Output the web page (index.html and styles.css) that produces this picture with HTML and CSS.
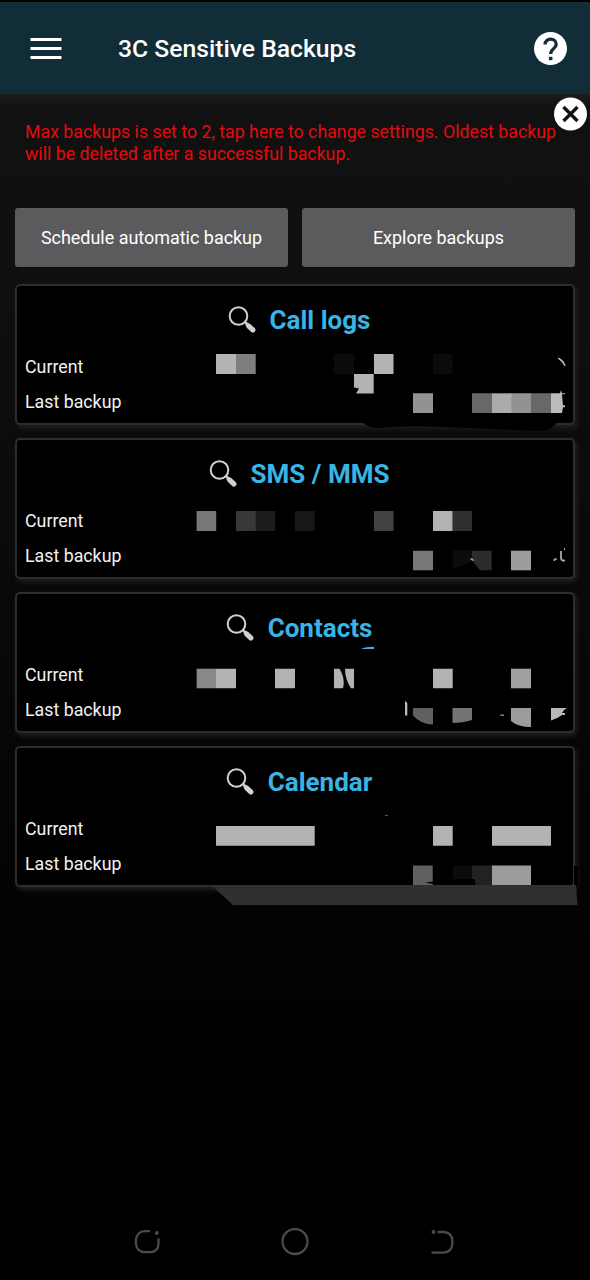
FILE: index.html
```html
<!DOCTYPE html>
<html lang="en">
<head>
<meta charset="utf-8">
<title>3C Sensitive Backups</title>
<link rel="stylesheet" href="styles.css">
</head>
<body>
<svg width="0" height="0" class="defs">
  <symbol id="lens" viewBox="0 0 28 28">
    <circle cx="10.500" cy="10" r="8.800" fill="none" stroke="#d2d0d2" stroke-width="2"/>
    <path d="M16.500 15.500l3 3" stroke="#d2d0d2" stroke-width="2.400"/>
    <path d="M19.500 18.800L21 20.300" stroke="#d2d0d2" stroke-width="4" stroke-linecap="round"/>
    <path d="M21 20.300l3.800 3.600" stroke="#d2d0d2" stroke-width="5.200" stroke-linecap="round"/>
  </symbol>
</svg>
<div class="screen">
  <header class="bar">
    <svg class="menu" viewBox="0 0 32 22"><path d="M.5 1.500h31M.5 10.500h31M.5 19.500h31" stroke="#fff" stroke-width="3"/></svg>
    <h1 class="title">3C Sensitive Backups</h1>
    <svg class="help" viewBox="0 0 34 34"><circle cx="17.500" cy="16.500" r="16.500" fill="#fff"/><path d="M12.100 12.500c0-7.200 11.100-6.900 11.100-.2 0 4.400-5.500 4.400-5.500 9.800" fill="none" stroke="#102d38" stroke-width="3.300"/><path d="M15.900 24.800h3.500v3.400h-3.500z" fill="#102d38"/></svg>
  </header>
  <main class="content">
    <section class="notice">
      <p class="warning">Max backups is set to 2, tap here to change settings. Oldest backup<br>will be deleted after a successful backup.</p>
      <svg class="close" viewBox="0 0 34 34"><circle cx="17.500" cy="17" r="16.500" fill="#fff"/><path d="M10.500 10l14 14M24.500 10l-14 14" stroke="#111" stroke-width="3.400"/></svg>
    </section>
    <div class="actions">
      <button class="btn">Schedule automatic backup</button>
      <button class="btn">Explore backups</button>
    </div>
    <section class="card">
      <h2 class="card-title"><svg class="lens"><use href="#lens"/></svg>Call logs</h2>
      <p class="row">Current</p><p class="row">Last backup</p>
      <svg class="mosaic" viewBox="0 284 590 154">
        <path d="M362 421h195v2q-6 8-20 8l-92-4q-42-2-65 1q-12 0-18-6z" fill="#000"/>
        <path d="M216 354h20v20h-20zM374 354h19.5v20H374zM354 374h19.7v19.5H356l3-5-5-1z" fill="#b3b3b3"/>
        <path d="M236 354h19.7v20H236z" fill="#7e7e7e"/>
        <path d="M334 354h20v20h-20zM433 354h19.5v20H433z" fill="#0b0b0b"/>
        <path d="M413 393.3h20v19.7h-20zM511 393.3h20v19.7h-20z" fill="#929292"/>
        <path d="M472 393.3h20v19.7h-20zM531 393.3h20v19.7h-20z" fill="#686868"/>
        <path d="M492 393.3h19.5v19.7H492z" fill="#ababab"/>
        <path d="M551 393.3h9l1-3 1 3h3v1h-3l1 11h2v2h-2l-1 5.7h-11z" fill="#bbb"/>
        <path d="M558 358q6 2 7 8-3-5-7-8" fill="#bbb" stroke="#bbb"/>
      </svg>
    </section>
    <section class="card">
      <h2 class="card-title"><svg class="lens"><use href="#lens"/></svg>SMS / MMS</h2>
      <p class="row">Current</p><p class="row">Last backup</p>
      <svg class="mosaic" viewBox="0 438 590 154">
        <path d="M196.6 511h19.6v20h-19.6zM413 550.7h20v19.6h-20z" fill="#777"/>
        <path d="M236 511h20v20h-20z" fill="#383838"/>
        <path d="M255.7 511H275v20h-19.3z" fill="#1d1d1d"/>
        <path d="M295 511h19.7v20H295z" fill="#171717"/>
        <path d="M374 511h19.5v20H374z" fill="#424242"/>
        <path d="M433 511h19.7v20H433z" fill="#b3b3b3"/>
        <path d="M452.7 511H472v20h-19.3z" fill="#303030"/>
        <path d="M452.7 550.7H472v9q-9 8-19.3 8z" fill="#0c0c0c"/>
        <path d="M472 550.7h19.7v19.6H480l-8-10z" fill="#2c2c2c"/>
        <path d="M470 558l3 1 1 2-3-1z" fill="#aaa"/>
        <path d="M511 550.7h20v19.6h-20z" fill="#9c9c9c"/>
        <path d="M553.5 560.5l3-2M561 551v7q0 3 4 2.5M564 549h1" fill="none" stroke="#aaa" stroke-width="1.8"/>
      </svg>
    </section>
    <section class="card">
      <h2 class="card-title"><svg class="lens"><use href="#lens"/></svg>Contacts</h2>
      <p class="row">Current</p><p class="row">Last backup</p>
      <svg class="mosaic" viewBox="0 592 590 154">
        <path d="M361 649q4-2.300 13-2.300v2.300z" fill="#4bafd0"/>
        <path d="M196.6 668.7h19.6v19.6h-19.6z" fill="#888"/>
        <path d="M216 668.7h20v19.6h-20zM275 668.7h20v19.6h-20zM334 668.7h5.5q6 10 3.5 19.6h-9zM345 668.7h9v19.6h-3q-6-9-6-19.6zM433 668.7h19.7v19.6H433z" fill="#b3b3b3"/>
        <path d="M511 668.7h20v19.6h-20z" fill="#a0a0a0"/>
        <path d="M405 701l2.3 2v12.5H405z" fill="#bbb"/>
        <path d="M413 708h20v16.500q-12 0-20-9z" fill="#606060"/>
        <path d="M452.5 708H472v12q-9 3-19.5 3z" fill="#747474"/>
        <path d="M499.5 714.5l4.5 0v1.5h-3z" fill="#888"/>
        <path d="M511 708h20v19q-13 0-20-6z" fill="#9c9c9c"/>
        <path d="M551 708h16q-4 2-5 5h3v2h-3q-5 4-11 5.500z" fill="#b8b8b8"/>
      </svg>
    </section>
    <section class="card">
      <h2 class="card-title"><svg class="lens"><use href="#lens"/></svg>Calendar</h2>
      <p class="row">Current</p><p class="row">Last backup</p>
      <svg class="mosaic" viewBox="0 746 590 154">
        <path d="M574 866h4v20h-4z" fill="#000"/>
        <path d="M211 885h365l1.500 20H233z" fill="#303030"/>
        <path d="M385 815h3v1h-3z" fill="#555"/>
        <path d="M216 826h98.700v19.700H216zM433 826h19.700v19.700H433zM492 826h59v19.700h-59z" fill="#b3b3b3"/>
        <path d="M413 865.500h19.700v16l-8 1 8 1.500v1H413z" fill="#606060"/>
        <path d="M452.700 865.500H472V879h-19.300z" fill="#0b0b0b"/>
        <path d="M472 865.500h20V885h-16.500l-1-6H472z" fill="#222"/>
        <path d="M492 865.500h39V885h-39z" fill="#9c9c9c"/>
      </svg>
    </section>
  </main>
  <nav class="nav">
    <svg class="nav-icon" viewBox="0 0 28 28"><path d="M17 3.200h-5.500a8.500 8.500 0 0 0-8.500 8.500v4a8.500 8.500 0 0 0 8.500 8.500h6a8 8 0 0 0 8-8V10.500" fill="none" stroke="#4b4b4b" stroke-width="2.300"/><circle cx="23.800" cy="5" r="1.900" fill="#4b4b4b"/></svg>
    <svg class="nav-icon" viewBox="0 0 28 28"><circle cx="14" cy="13.500" r="12.500" fill="none" stroke="#4b4b4b" stroke-width="2.300"/></svg>
    <svg class="nav-icon" viewBox="0 0 28 28"><path d="M8.500 4H15a8.300 8.300 0 0 1 8.300 8.300v4a8.300 8.300 0 0 1-8.300 8.300H2.500" fill="none" stroke="#4b4b4b" stroke-width="2.300"/><circle cx="4.400" cy="4" r="1.900" fill="#4b4b4b"/></svg>
  </nav>
</div>
</body>
</html>
```
FILE: styles.css
```css
* { box-sizing: border-box; }
body { margin: 0; background: #000; font-family: Roboto, "Noto Sans", sans-serif; }
h1, h2, p { margin: 0; }
.defs { position: absolute; }
.screen {
  width: 590px;
  height: 1280px;
  display: flex;
  flex-direction: column;
  overflow: hidden;
  background: linear-gradient(#111 94px, #101010 250px, #0c0c0c 450px, #060606 750px, #020202 950px, #000 1180px);
}
.bar {
  height: 94px;
  flex: none;
  display: flex;
  align-items: center;
  padding: 2px 22px 0 30px;
  background: #102d38;
  border-top: 2px solid #000;
}
.menu { width: 32px; height: 22px; margin-bottom: 1px; }
.title {
  flex: 1;
  margin-left: 56px;
  color: #fff;
  font-size: 24.7px;
  line-height: 30px;
  font-weight: 500;
}
.help { width: 34px; height: 34px; margin-right: 1px; }
.content {
  flex: 1;
  padding: 0 15px;
  background: linear-gradient(#1d1d1d, rgba(17, 17, 17, 0) 12px);
}
.notice { position: relative; height: 114px; padding: 28px 0 0 10px; }
.warning { color: #e50a0f; font-size: 17.75px; line-height: 21.5px; white-space: nowrap; }
.close { position: absolute; top: 3px; right: -12px; width: 34px; height: 34px; }
.actions { display: flex; gap: 14px; margin-bottom: 17px; }
.btn {
  flex: 1;
  height: 59px;
  padding: 0;
  border: 0;
  border-radius: 3px;
  background: #5b5b5d;
  color: #fff;
  font: 400 17.95px/22px Roboto, "Noto Sans", sans-serif;
}
.card {
  position: relative;
  height: 141px;
  margin-bottom: 13px;
  padding: 14px 8px 0;
  background: #000;
  border: 2px solid #2d2d2d;
  border-radius: 5px;
  box-shadow: 2px 3px 5px #202020;
}
.card-title {
  display: flex;
  justify-content: center;
  align-items: center;
  height: 40px;
  padding-left: 8px;
  margin-bottom: 9px;
  color: #3ab4e4;
  font-size: 26px;
  font-weight: 700;
}
.lens { width: 28px; height: 28px; margin-right: 14px; }
.row { height: 35px; color: #f2f2f2; font-size: 17.8px; line-height: 36px; }
.mosaic {
  position: absolute;
  top: -2px;
  left: -17px;
  width: 590px;
  height: 154px;
  overflow: visible;
}
.nav {
  height: 52px;
  flex: none;
  display: flex;
  justify-content: space-between;
  padding: 0 133px;
}
.nav-icon { width: 28px; height: 28px; }
```
